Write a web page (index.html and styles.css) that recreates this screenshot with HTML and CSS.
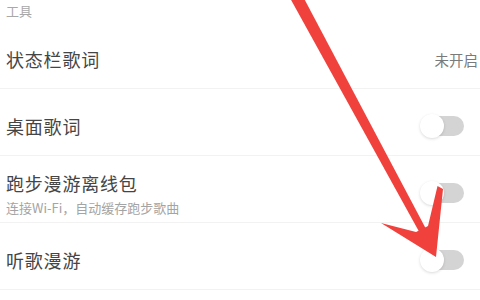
FILE: index.html
```html
<!DOCTYPE html>
<html lang="zh-CN">
  <head>
    <meta charset="UTF-8" />
    <meta name="viewport" content="width=device-width, initial-scale=1.0" />
    <title>设置</title>
    <link rel="stylesheet" href="styles.css">
  </head>
  <body>
    <div class="page">
      <div class="group_title">工具</div>

      <!-- 状态栏歌词 -->
      <div class="row">
        <div class="row_text">
          <div class="row_title">状态栏歌词</div>
        </div>
        <div class="row_value">未开启</div>
      </div>

      <!-- 桌面歌词 -->
      <div class="row">
        <div class="row_text">
          <div class="row_title">桌面歌词</div>
        </div>
        <div class="switch"><span class="knob"></span></div>
      </div>

      <!-- 跑步漫游离线包 -->
      <div class="row">
        <div class="row_text">
          <div class="row_title">跑步漫游离线包</div>
          <div class="row_sub">连接Wi-Fi，自动缓存跑步歌曲</div>
        </div>
        <div class="switch"><span class="knob"></span></div>
      </div>

      <!-- 听歌漫游 -->
      <div class="row">
        <div class="row_text">
          <div class="row_title">听歌漫游</div>
        </div>
        <div class="switch"><span class="knob"></span></div>
      </div>

      <!-- 红色箭头 (覆盖在上面) -->
      <svg class="arrow" width="480" height="300" viewBox="0 0 480 300">
        <polygon points="290,-2 300.6,-8 425.5,228 419,231.5" fill="#f0413c" />
        <polygon points="436,257 381,223 416,232 428,226 437.5,186 443,189" fill="#f0413c" />
      </svg>
    </div>
  </body>
</html>
```

FILE: styles.css
```css
*,
*::before,
*::after {
  margin: 0;
  padding: 0;
  box-sizing: border-box;
}

body {
  background: #ffffff;
  font-family: "Noto Sans CJK SC", "Noto Sans", sans-serif;
  overflow: hidden;
}

/* ---------------- 整页 ---------------- */
.page {
  position: relative;
  width: 480px;
  height: 300px;
  overflow: hidden;
}

/* ---------------- 分组标题 ---------------- */
.group_title {
  height: 22px;
  padding: 3px 0 0 6px;

  font-size: 13px;
  line-height: 16px;
  color: #a8a8a8;
}

/* ---------------- 每一行 ---------------- */
.row {
  display: flex;
  justify-content: space-between;
  align-items: center;

  height: 67px;
  padding: 8px 16px 0 6px;

  border-bottom: 1px solid #f2f2f2;
}

.row_title {
  font-size: 18px;
  line-height: 22px;
  letter-spacing: 0.8px;
  color: #454545;
}

.row_sub {
  margin-top: 6px;

  font-size: 13px;
  line-height: 15px;
  color: #a4a4a4;
}

.row_value {
  margin-right: -14px;

  font-size: 14.5px;
  color: #7a7a7a;
}

/* ---------------- 开关 (关闭状态) ---------------- */
.switch {
  position: relative;
  width: 42px;
  height: 20px;

  border-radius: 10px;
  background: #d4d4d4;
}

.knob {
  position: absolute;
  top: -2px;
  left: -2px;

  width: 24px;
  height: 24px;

  border-radius: 50%;
  background: #ffffff;
  box-shadow: 0 1px 3px rgba(0, 0, 0, 0.15);
}

/* ---------------- 红色箭头 ---------------- */
.arrow {
  position: absolute;
  top: 0;
  left: 0;
}
```
